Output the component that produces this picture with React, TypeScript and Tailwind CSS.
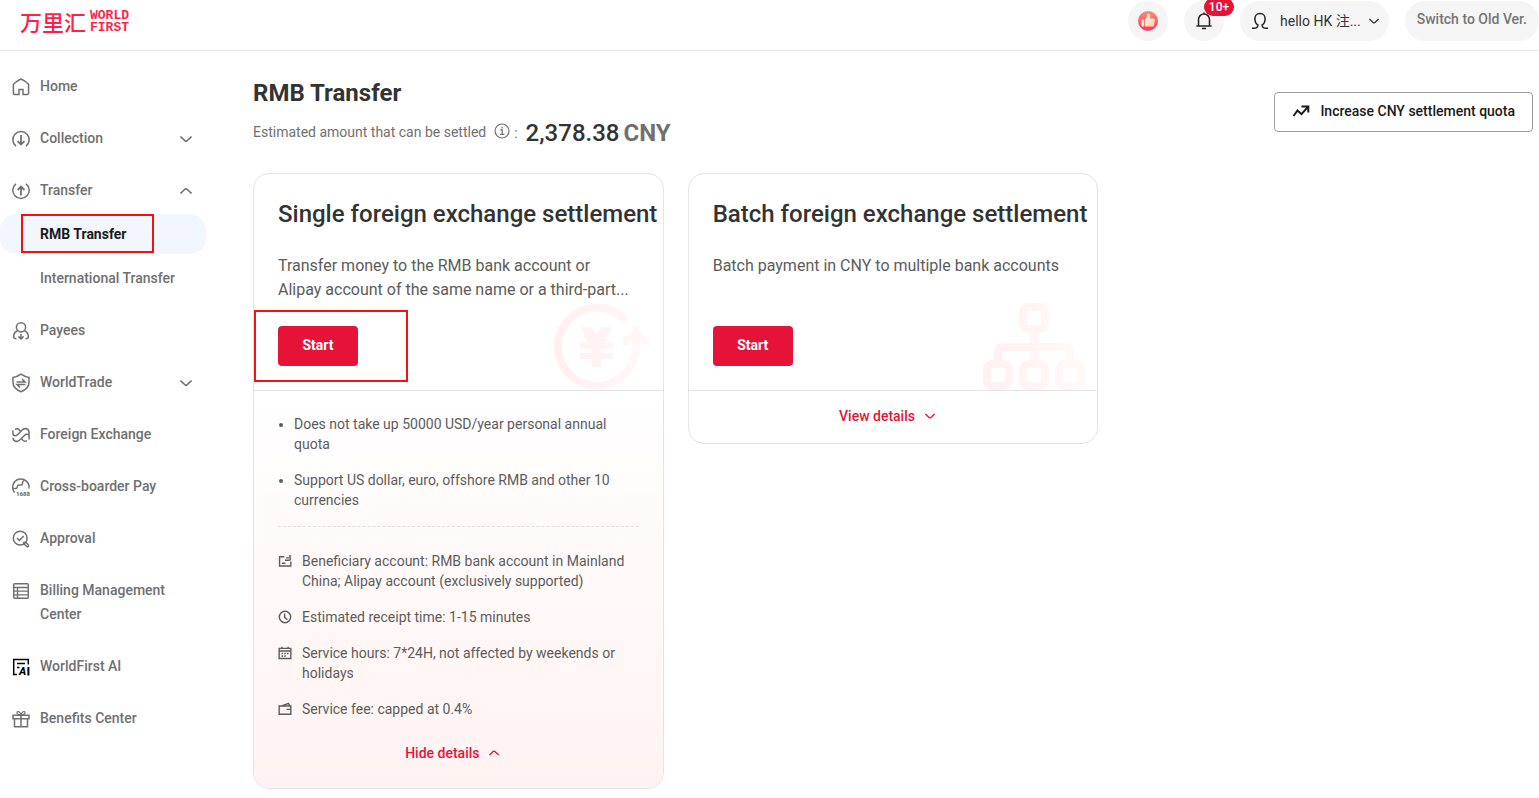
import { useState } from 'react';
import type { ReactNode } from 'react';

interface NavItem {
  label: string;
  icon: ReactNode;
  chevron?: 'up' | 'down';
  children?: { label: string; active?: boolean }[];
}

function Icon({ children, className = 'text-[#707070]' }: { children: ReactNode; className?: string }) {
  return (
    <svg
      viewBox="0 0 18 18"
      className={`h-[18px] w-[18px] shrink-0 overflow-visible ${className}`}
      fill="none"
      stroke="currentColor"
      strokeWidth="1.5"
      aria-hidden="true"
    >
      {children}
    </svg>
  );
}

function Chevron({ up, className = 'h-3 w-3' }: { up?: boolean; className?: string }) {
  return (
    <svg viewBox="0 0 12 12" className={className} fill="none" stroke="currentColor" strokeWidth="1.6" aria-hidden="true">
      <path d={up ? 'M0.5 8.5 5.2 4Q6 3.4 6.8 4L11.5 8.5' : 'M0.5 3.5 5.2 8Q6 8.6 6.8 8L11.5 3.5'} />
    </svg>
  );
}

const navItems: NavItem[] = [
  {
    label: 'Home',
    icon: (
      <Icon>
        <path d="M7 16.4H2.6a1.2 1.2 0 0 1-1.2-1.2V6.3Q5 2.6 9 1q4 1.6 7.6 5.3v8.9a1.2 1.2 0 0 1-1.2 1.2H11v-5H7z" />
      </Icon>
    ),
  },
  {
    label: 'Collection',
    chevron: 'down',
    icon: (
      <Icon>
        <path d="M4 16.2A8.2 8.2 0 1 1 14 16.2" />
        <path d="M9 5v9.5M5.6 11.2 9 14.5l3.4-3.3" strokeWidth="1.8" />
      </Icon>
    ),
  },
  {
    label: 'Transfer',
    chevron: 'up',
    icon: (
      <Icon>
        <path d="M4 1.8A8.2 8.2 0 1 0 14 1.8" />
        <path d="M9 13.5V4.6M5.6 8 9 4.6 12.4 8" strokeWidth="1.8" />
      </Icon>
    ),
    children: [{ label: 'RMB Transfer', active: true }, { label: 'International Transfer' }],
  },
  {
    label: 'Payees',
    icon: (
      <Icon>
        <circle cx="9" cy="5.3" r="4.6" />
        <path d="M5.6 8.8C2.6 10 1.6 12.3 1.7 14.8c0 1.3 1.3 2 2.8 2M12.4 8.8c3 1.2 4 3.5 3.9 6 0 1.3-1.3 2-2.8 2" />
        <path d="M9 12v5M6.4 14.4 9 17l2.6-2.6" />
      </Icon>
    ),
  },
  {
    label: 'WorldTrade',
    chevron: 'down',
    icon: (
      <Icon>
        <path d="M9 .2Q12.5 2.8 17 3.4v5.2c0 4.6-4 7.6-8 9.2-4-1.6-8-4.6-8-9.2V3.4Q5.5 2.8 9 .2z" />
        <path d="M4.6 8H13L10 5M13.4 10.6H5l3 2.8" />
      </Icon>
    ),
  },
  {
    label: 'Foreign Exchange',
    icon: (
      <Icon>
        <path d="M.900 4.500v3.200Q1.200 9.700 3.200 9.700 4.400 9.700 5.400 8.700L10.500 3.800C12.700 1.700 17 2.500 17 6.200V9" />
        <path d="M17.100 13.500v-3.200Q16.800 8.300 14.800 8.300 13.600 8.300 12.600 9.300L7.500 14.200C5.300 16.300 1 15.500 1 11.800" />
        <path d="M3 3.500Q5.400 1.800 7.300 3.900L8.500 5.300M15 14.500Q12.600 16.200 10.700 14.100L9.500 12.700" />
      </Icon>
    ),
  },
  {
    label: 'Cross-boarder Pay',
    icon: (
      <Icon>
        <path d="M2.600 14.500A8.200 8.200 0 1 1 17 10.500" />
        <path d="M1.300 10.500H4Q5.500 10.300 5.300 8.700 5.300 7.200 7 7H9.300Q10.500 7 10.500 5.500V4.500Q10.700 3 12.500 2.600" />
        <text x="4" y="17.600" fontSize="6" fontWeight="900" fontFamily="Roboto, sans-serif" fill="currentColor" stroke="none">
          1688
        </text>
      </Icon>
    ),
  },
  {
    label: 'Approval',
    icon: (
      <Icon>
        <circle cx="8.200" cy="8.200" r="6.900" />
        <path d="M5 8l2.500 2.500L11.600 6" />
        <path d="M11.800 12.600 14 12.400l2.300 2.700c.7 1-.6 2.200-1.500 1.400l-2.600-2.300z" />
      </Icon>
    ),
  },
  {
    label: 'Billing Management Center',
    icon: (
      <Icon>
        <rect x="1.700" y="1.700" width="14.600" height="14.600" rx="1" />
        <path d="M1.700 5.500h14.600M1.700 9.200h14.600M1.700 12.800h14.600M5.500 5.500v11" strokeWidth="1.300" />
      </Icon>
    ),
  },
  {
    label: 'WorldFirst AI',
    icon: (
      <Icon className="text-black">
        <path d="M5 16.500H1.700V1.500h14.600v5" />
        <path d="M5 5.500h8M5 9.500h2.500" />
        <text x="7" y="17.200" fontSize="11" fontWeight="800" fontStyle="italic" fontFamily="Roboto, sans-serif" fill="currentColor" stroke="none">
          A
        </text>
        <path d="M16.400 9v8.500" strokeWidth="2" />
      </Icon>
    ),
  },
  {
    label: 'Benefits Center',
    icon: (
      <Icon>
        <path d="M1 5.200h16v3.500H1zM2.500 8.700v8h13v-8M9 5.200v11.500" />
        <path d="M9 5C8 1.500 5.500.500 5 2.500 4.800 4 6.500 5 9 5c2.500 0 4.200-1 4-2.500C12.500.500 10 1.500 9 5z" strokeWidth="1.200" />
      </Icon>
    ),
  },
];

const terms = [
  {
    text: 'Beneficiary account: RMB bank account in Mainland China; Alipay account (exclusively supported)',
    icon: <path d="M8 3.500H2v12h14.500V9.500M5 11.800h4.500M9 8h5q2 0 2-2M10.500 5H17M14 2.500h3" />,
  },
  {
    text: 'Estimated receipt time: 1-15 minutes',
    icon: (
      <>
        <circle cx="9" cy="9" r="7.300" />
        <path d="M8.500 4.500v5l3.500 3" />
      </>
    ),
  },
  {
    text: 'Service hours: 7*24H, not affected by weekends or holidays',
    icon: (
      <>
        <path d="M1.500 3h15v13h-15zM1.500 6.500h15M5 1v3M13 1v3" />
        <path d="M4.500 9.700h2M8 9.700h2M11.500 9.700h2M4.500 12.900h2M8 12.900h2" strokeWidth="1.800" />
      </>
    ),
  },
  {
    text: 'Service fee: capped at 0.4%',
    icon: <path d="M1.500 5.200h15v10.600h-15zM5 5l8.500-3.300L15 5M11 9.500h5.500" />,
  },
];

// faint drawings in the corner of each card
function YuanMark() {
  return (
    <svg viewBox="0 0 100 88" className="absolute right-3 bottom-0 h-[88px] w-[100px]" fill="none" stroke="url(#yuan)" aria-hidden="true">
      <defs>
        <linearGradient id="yuan" gradientUnits="userSpaceOnUse" x1="0" y1="0" x2="100" y2="0">
          <stop stopColor="#ffeff0" />
          <stop offset="1" stopColor="#fff9f8" />
        </linearGradient>
      </defs>
      <path d="M75 18.500A39 39 0 1 0 85 45V36" strokeWidth="8" />
      <path d="M72 44V36Q79 34 84 25H87Q92 34 99 37V44Q92 42 89 38H82Q79 42 72 44z" fill="url(#yuan)" stroke="none" />
      <path d="M30 25H40L45.500 32 51 25H61L54 41H62V47H50V51H62V57H50V65H41V57H29V51H41V47H29V41H37z" fill="url(#yuan)" stroke="none" />
    </svg>
  );
}

function TreeMark() {
  return (
    <svg viewBox="0 0 102 88" className="absolute right-3 bottom-0 h-[88px] w-[102px]" fill="none" stroke="url(#tree)" strokeWidth="8" aria-hidden="true">
      <defs>
        <linearGradient id="tree" gradientUnits="userSpaceOnUse" x1="0" y1="0" x2="102" y2="0">
          <stop stopColor="#fff0f1" />
          <stop offset="1" stopColor="#fffaf9" />
        </linearGradient>
      </defs>
      <rect x="40" y="5" width="22" height="22" rx="5" />
      <rect x="4" y="62" width="22" height="22" rx="5" />
      <rect x="40" y="62" width="22" height="22" rx="5" />
      <rect x="76" y="62" width="22" height="22" rx="5" />
      <path d="M51 31v27M15 58v-8q0-5 5-5h62q5 0 5 5v8" />
    </svg>
  );
}

function StartButton() {
  return (
    <button type="button" className="mt-6 block h-10 w-20 rounded bg-[#e61339] pb-0.5 text-sm font-bold text-white">
      Start
    </button>
  );
}

function DetailsToggle({ open, onClick }: { open: boolean; onClick: () => void }) {
  return (
    <div className="flex justify-center pr-3">
      <button
        type="button"
        aria-expanded={open}
        onClick={onClick}
        className="flex items-center gap-[10px] text-sm font-medium text-[#e61339]"
      >
        {open ? 'Hide details' : 'View details'}
        <Chevron up={open} className="h-[10px] w-[10px]" />
      </button>
    </div>
  );
}

function Header() {
  return (
    <header className="flex h-[51px] items-start justify-between border-b border-[#e4e4e4] pt-px">
      <a href="#" className="mt-1 ml-5 flex items-center gap-1 text-[#ff1f4b]">
        <span className="pb-px font-['Noto_Sans_CJK_SC',sans-serif] text-[22px] leading-8 font-medium">万里汇</span>
        <span className="text-center font-['Liberation_Mono',monospace] text-[13px] leading-3 font-bold">
          WORLD
          <br />
          FIRST
        </span>
      </a>
      <div className="flex gap-4">
        <button type="button" aria-label="Feedback" className="flex h-10 w-10 items-center justify-center rounded-full bg-[#f5f5f5]">
          <svg viewBox="0 0 20 20" className="h-5 w-5" aria-hidden="true">
            <defs>
              <linearGradient id="thumbBg" x1="0" y1="0" x2="0" y2="1">
                <stop stopColor="#ff8a70" />
                <stop offset="1" stopColor="#fb3a5e" />
              </linearGradient>
              <linearGradient id="thumb" x1="0" y1="0" x2="1" y2="1">
                <stop stopColor="#fff" />
                <stop offset="1" stopColor="#ffd2a8" />
              </linearGradient>
            </defs>
            <circle cx="10" cy="10" r="10" fill="url(#thumbBg)" />
            <path
              d="M3.500 8.500h2.700v7H4.500a1 1 0 0 1-1-1zM7 8.300c1.500-1 2.200-2.600 2.300-4.500.1-1.400 2.600-1.400 2.900.600.2 1.300-.1 2.100-.4 3.100h3.800c1 0 1.500.8 1.300 1.700l-1 5c-.2.800-.8 1.300-1.600 1.300H7z"
              fill="url(#thumb)"
            />
          </svg>
        </button>
        <button
          type="button"
          aria-label="Notifications"
          className="relative flex h-10 w-10 items-center justify-center rounded-full bg-[#f5f5f5] text-[#222]"
        >
          <Icon className="text-[#222]">
            <path d="M3.500 14V7.500a5.500 5.500 0 0 1 11 0V14M1.500 14h15M9 2V.500M7 16.600h4" />
          </Icon>
          <span className="absolute -top-[3px] left-5 flex h-[18px] w-[30px] items-center justify-center rounded-full bg-[#e61339] text-xs font-medium text-white">
            10+
          </span>
        </button>
        <button type="button" className="flex h-10 items-center rounded-full bg-[#f5f5f5] pr-[10px] pl-[11px] text-sm text-[#333]">
          <Icon className="text-[#222]">
            <path d="M1 16.300h2c2.500 0 3.800-1.300 3.900-3.300C4.800 11.800 3.900 9.300 3.900 6.800c0-3 2-5.200 5.100-5.200s5.100 2.200 5.100 5.200c0 2.500-.9 5-3 6.200.1 2 1.400 3.300 3.900 3.300h2" />
          </Icon>
          <span className="ml-[11px] pb-px">hello HK 注...</span>
          <Chevron className="ml-2 h-[10px] w-[10px]" />
        </button>
        <button type="button" className="h-10 rounded-full bg-[#f5f5f5] px-3 pb-1 text-sm font-medium text-[#757575]">
          Switch to Old Ver.
        </button>
      </div>
    </header>
  );
}

function Sidebar() {
  return (
    <nav className="flex w-[206px] shrink-0 flex-col gap-3 pt-[15px] text-sm leading-6 font-medium text-[#707070]">
      {navItems.map((item) => (
        <div key={item.label}>
          <a href="#" className="flex items-start gap-[10px] py-2 pr-[14px] pl-3">
            <span className="flex h-6 items-center pt-[2px]">{item.icon}</span>
            <span className="flex-1">{item.label}</span>
            {item.chevron && (
              <span className="flex h-6 items-center pt-[2px]">
                <Chevron up={item.chevron === 'up'} />
              </span>
            )}
          </a>
          {item.children?.map((child) => (
            <a
              key={child.label}
              href="#"
              className={`relative mt-1 block py-2 pl-10 ${child.active ? 'rounded-2xl bg-[#f2f7ff] font-bold text-[#1a1a1a]' : ''}`}
            >
              {child.label}
              {child.active && <span className="absolute top-0 left-[21px] h-[39px] w-[133px] border-2 border-[#f11212]" />}
            </a>
          ))}
        </div>
      ))}
    </nav>
  );
}

export default function App() {
  const [singleOpen, setSingleOpen] = useState(true);
  const [batchOpen, setBatchOpen] = useState(false);

  return (
    <div className="min-h-screen overflow-hidden bg-white font-[Roboto,'Noto_Sans_CJK_SC',sans-serif]">
      <Header />
      <div className="flex">
        <Sidebar />
        <main className="mr-[6px] ml-[47px] flex-1 pt-[26px] pb-2">
          <div className="flex items-start justify-between">
            <div>
              <h1 className="text-2xl font-bold text-[#333]">RMB Transfer</h1>
              <div className="mt-2 flex h-8 items-center text-sm text-[#707070]">
                <span className="pb-0.5">Estimated amount that can be settled</span>
                <svg viewBox="0 0 16 16" className="mr-1 mb-1 ml-2 h-4 w-4" fill="none" stroke="currentColor" strokeWidth="1.2" aria-hidden="true">
                  <circle cx="8" cy="8" r="7" />
                  <path d="M6.300 6.800H8.200v4.400M6 11.400h4.400M8 3.800v1.600" />
                </svg>
                :
                <span className="ml-2 text-2xl font-medium text-[#333]">2,378.38</span>
                <span className="ml-1 text-2xl font-bold">CNY</span>
              </div>
            </div>
            <button
              type="button"
              className="mt-[15px] flex h-10 items-center gap-[10px] rounded border border-[#9c9c9c] px-[17px] pb-0.5 text-sm font-medium text-[#1a1a1a]"
            >
              <Icon className="text-[#1a1a1a]">
                <path d="M1.500 14 5.500 8.500 9.500 12.200 15.800 5.200M9.500 4.500H16.300V10.500" strokeWidth="2" />
              </Icon>
              Increase CNY settlement quota
            </button>
          </div>

          <div className="mt-6 grid grid-cols-3 items-start gap-6">
            <section className="overflow-hidden rounded-2xl border border-[#e4e4e4]">
              <div className="relative border-b border-[#e4e4e4] p-6">
                <YuanMark />
                <h2 className="text-2xl font-medium whitespace-nowrap text-[#333]">Single foreign exchange settlement</h2>
                <p className="mt-6 mr-1 line-clamp-2 h-12 text-base text-[#5c5c5c]">
                  Transfer money to the RMB bank account or Alipay account of the same name or a third-part...
                </p>
                <StartButton />
                <span className="absolute bottom-2 left-0 h-[72px] w-[154px] border-2 border-[#f11212]" />
              </div>
              <div className="bg-linear-to-b from-white to-[#fff3f2] px-6 pt-[23px] pb-[25px] text-sm text-[#5c5c5c]">
                {singleOpen && (
                  <div className="pb-6">
                    <ul className="list-disc space-y-4 border-b border-dashed border-[#e0dede] pb-4 pl-4">
                      <li>Does not take up 50000 USD/year personal annual quota</li>
                      <li>Support US dollar, euro, offshore RMB and other 10 currencies</li>
                    </ul>
                    <ul className="mt-6 space-y-4">
                      {terms.map((term) => (
                        <li key={term.text} className="flex gap-[10px]">
                          <svg
                            viewBox="0 0 18 18"
                            className="mt-[3px] h-[14px] w-[14px] shrink-0"
                            fill="none"
                            stroke="currentColor"
                            strokeWidth="1.8"
                            aria-hidden="true"
                          >
                            {term.icon}
                          </svg>
                          <span>{term.text}</span>
                        </li>
                      ))}
                    </ul>
                  </div>
                )}
                <DetailsToggle open={singleOpen} onClick={() => setSingleOpen(!singleOpen)} />
              </div>
            </section>

            <section className="overflow-hidden rounded-2xl border border-[#e4e4e4]">
              <div className="relative border-b border-[#e4e4e4] p-6">
                <TreeMark />
                <h2 className="text-2xl font-medium whitespace-nowrap text-[#333]">Batch foreign exchange settlement</h2>
                <p className="mt-6 mr-1 line-clamp-2 h-12 text-base text-[#5c5c5c]">
                  Batch payment in CNY to multiple bank accounts
                </p>
                <StartButton />
              </div>
              <div className="pt-[15px] pb-[17px]">
                <DetailsToggle open={batchOpen} onClick={() => setBatchOpen(!batchOpen)} />
              </div>
            </section>
          </div>
        </main>
      </div>
    </div>
  );
}
